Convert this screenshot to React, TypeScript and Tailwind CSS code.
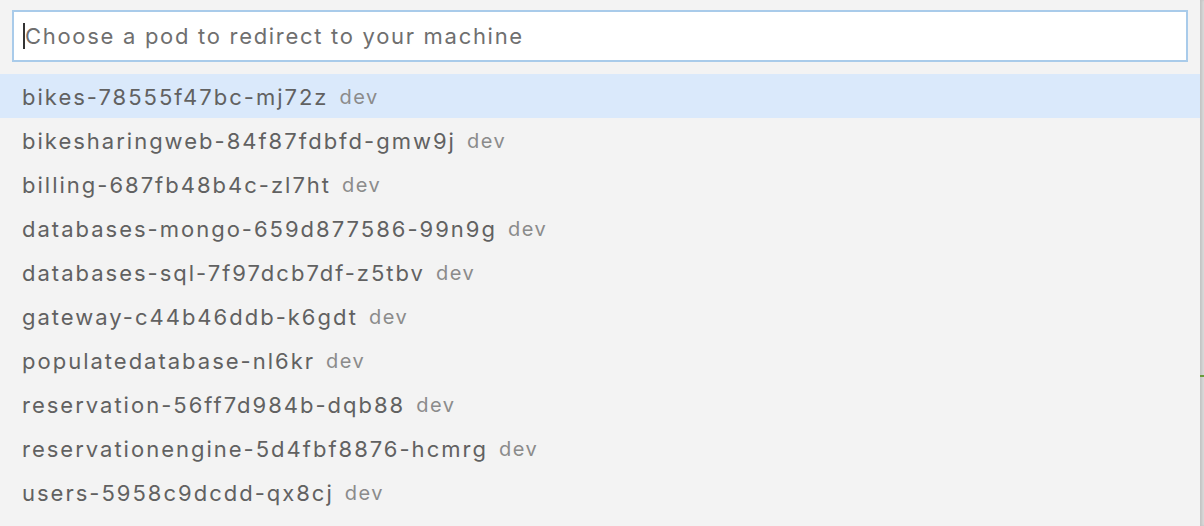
const pods = [
  "bikes-78555f47bc-mj72z",
  "bikesharingweb-84f87fdbfd-gmw9j",
  "billing-687fb48b4c-zl7ht",
  "databases-mongo-659d877586-99n9g",
  "databases-sql-7f97dcb7df-z5tbv",
  "gateway-c44b46ddb-k6gdt",
  "populatedatabase-nl6kr",
  "reservation-56ff7d984b-dqb88",
  "reservationengine-5d4fbf8876-hcmrg",
  "users-5958c9dcdd-qx8cj",
];

export default function App() {
  return (
    <div className="flex h-[526px] w-[1204px] overflow-hidden bg-[#e6e6e6] font-['Inter',sans-serif]">
      <div className="flex w-[1200px] flex-col bg-[#f3f3f3]">
        {/* Input */}
        <div className="px-3 pt-[10px] pb-3">
          <div className="flex h-[52px] items-center border-2 border-[#a9cbea] bg-white pl-[9px]">
            <span className="h-[26px] w-[2px] bg-[#333]" />
            <span className="text-[22px] tracking-[1.7px] text-[#6f6f6f]">
              Choose a pod to redirect to your machine
            </span>
          </div>
        </div>

        {/* List */}
        <div className="flex flex-col">
          {pods.map((p, i) => (
            <div
              key={p}
              className={`flex h-[44px] items-center gap-[11px] pl-[22px] pt-[2px] ${i === 0 ? "bg-[#dae9fb]" : ""}`}
            >
              <span className="text-[22px] tracking-[2px] text-[#616161]">{p}</span>
              <span className="text-[20px] tracking-[1.5px] text-[#8b8b8b]">dev</span>
            </div>
          ))}
        </div>
      </div>

      {/* Right edge */}
      <div className="relative w-[4px] bg-[#dcdcdc] shadow-[inset_2px_0_3px_rgba(0,0,0,0.12)]">
        <div className="absolute top-[375px] left-0 h-[2px] w-[4px] bg-[#6a9a3a]" />
      </div>
    </div>
  );
}
